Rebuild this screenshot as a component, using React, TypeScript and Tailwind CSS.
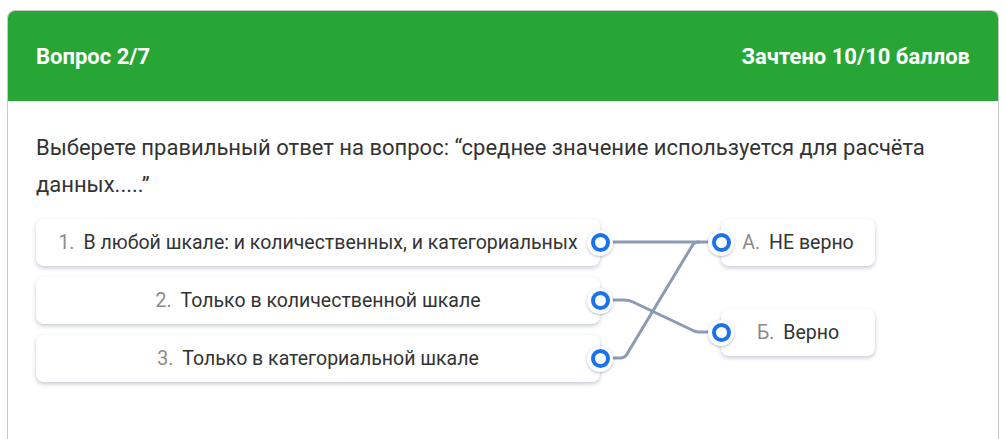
import React from "react";

type Item = { num: string; text: string };

const leftItems: Item[] = [
  { num: "1.", text: "В любой шкале: и количественных, и категориальных" },
  { num: "2.", text: "Только в количественной шкале" },
  { num: "3.", text: "Только в категориальной шкале" },
];

function Dot({ side }: { side: "left" | "right" }) {
  return (
    <span
      className={`absolute top-1/2 -translate-y-1/2 z-10 flex h-[26px] w-[26px] items-center justify-center rounded-full bg-white shadow-[0_1px_3px_rgba(60,70,100,0.35)] ${
        side === "right" ? "right-0 translate-x-1/2" : "left-0 -translate-x-1/2"
      }`}
    >
      <span className="h-[19px] w-[19px] rounded-full border-[4px] border-[#1a73e8] bg-white" />
    </span>
  );
}

function Option({ num, text, side, width }: Item & { side: "left" | "right"; width: string }) {
  return (
    <div
      className={`relative flex h-[47px] ${width} items-center justify-center rounded-lg bg-white text-[19.5px] shadow-[0_2px_4px_rgba(70,80,110,0.3)]`}
    >
      <span className="text-[#8a8a8a]">{num}</span>
      <span className="ml-[9px] text-[#333]">{text}</span>
      <Dot side={side} />
    </div>
  );
}

export default function App() {
  return (
    <div className="bg-white pl-[7px] pt-[10px] h-[439px]" style={{ fontFamily: "Roboto, sans-serif" }}>
      <div className="w-[992px] h-[429px] rounded-t-lg border border-b-0 border-[#c9c9c9] overflow-hidden">
        {/* HEADER */}
        <div className="flex h-[90px] items-center justify-between bg-[#27a635] px-[28px] text-[22px] font-bold text-white">
          <span>Вопрос 2/7</span>
          <span>Зачтено 10/10 баллов</span>
        </div>

        {/* BODY */}
        <div className="px-[28px] pt-[28px]">
          <p className="text-[22px] leading-[37px] text-[#333]">
            Выберете правильный ответ на вопрос: “среднее значение используется для расчёта данных.....”
          </p>

          <div className="relative mt-[16px] flex">
            <div className="flex w-[564px] flex-col gap-[11px]">
              {leftItems.map((it) => (
                <Option key={it.num} {...it} side="right" width="w-[564px]" />
              ))}
            </div>
            <div className="ml-[121px] flex flex-col gap-[43px]">
              <Option num="А." text="НЕ верно" side="left" width="w-[154px]" />
              <Option num="Б." text="Верно" side="left" width="w-[154px]" />
            </div>

            {/* connection lines */}
            <svg className="absolute left-0 top-0 h-[170px] w-[700px]" viewBox="0 0 700 170" fill="none">
              <g stroke="#8d9ab4" strokeWidth="3" strokeLinecap="round" strokeLinejoin="round">
                <path d="M570 23 L680 23" />
                <path d="M575 81 L588 81 Q593 81 597 83 L656 111 Q659 113 663 113 L680 113" />
                <path d="M575 139 L584 139 Q589 139 591 135 L656 27 Q658 23 663 23" />
              </g>
            </svg>
          </div>
        </div>
      </div>
    </div>
  );
}
